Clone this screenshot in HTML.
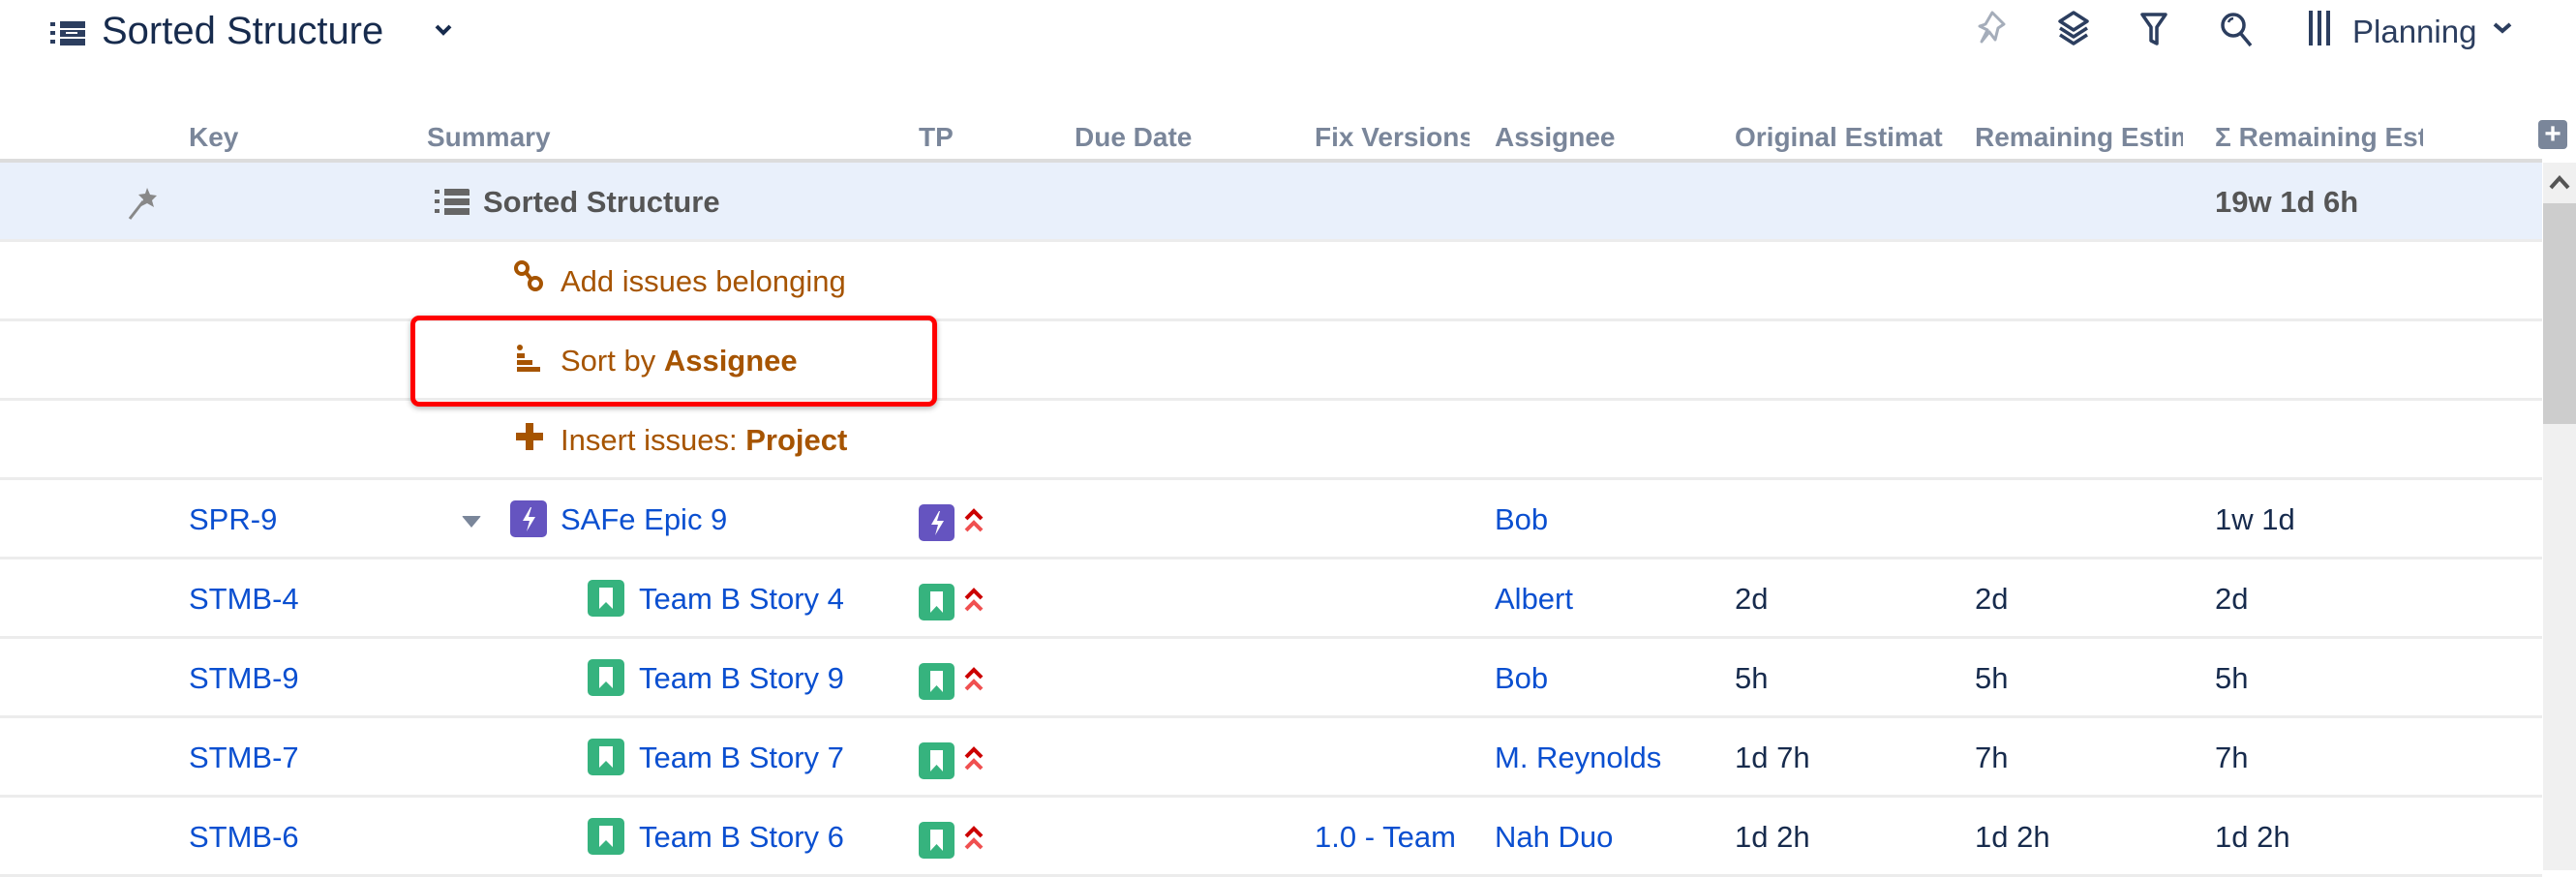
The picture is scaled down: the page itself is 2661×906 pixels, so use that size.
<!DOCTYPE html>
<html><head><meta charset="utf-8"><style>
*{margin:0;padding:0;box-sizing:border-box}
body{width:2661px;height:899px;overflow:hidden;background:#fff;font-family:"Liberation Sans",sans-serif;position:relative}
.a{position:absolute;white-space:nowrap}
.h{font-weight:bold;color:#7a869a;font-size:28px;top:126px}
.row{position:absolute;left:0;width:2626px;height:82px;border-bottom:3px solid #ececec}
.t{font-size:31px;position:absolute;white-space:nowrap;line-height:82px;top:0}
.lk{color:#0a4fd0}
.dk{color:#172b4d}
.or{color:#a65400}
.ic{position:absolute;border-radius:5px}
</style></head><body>
<!-- top bar -->
<svg class="a" style="left:50px;top:20px" width="40" height="30" viewBox="0 0 40 30"><g fill="#2c3e5f"><rect x="12" y="2" width="26" height="7"/><rect x="12" y="11" width="26" height="7"/><rect x="12" y="20" width="26" height="7"/><rect x="2" y="3" width="5" height="4"/><rect x="2" y="12" width="5" height="4"/><rect x="2" y="21" width="5" height="4"/></g><g fill="#fff"><rect x="18" y="13" width="12" height="2"/></g></svg>
<div class="a" style="left:105px;top:10px;font-size:40px;color:#172b4d">Sorted Structure</div>
<svg class="a" style="left:448px;top:24px" width="20" height="14"><path d="M3 3l7 7 7-7" stroke="#172b4d" stroke-width="4" fill="none"/></svg>
<svg class="a" style="left:2040px;top:10px" width="36" height="40" viewBox="0 0 36 40"><path d="M18 3l12 12-6 4-3 12-6-8-8 10 6-12-8-4 6-2z" stroke="#a5adba" stroke-width="3" fill="none" stroke-linejoin="round"/></svg>
<svg class="a" style="left:2124px;top:10px" width="36" height="38" viewBox="0 0 36 38"><g stroke="#2c3e5f" stroke-width="3.5" fill="none" stroke-linejoin="round"><path d="M18 3l14 9-14 9-14-9z"/><path d="M4 19l14 9 14-9"/><path d="M4 26l14 9 14-9"/></g></svg>
<svg class="a" style="left:2210px;top:12px" width="30" height="36" viewBox="0 0 30 36"><path d="M3 3h24l-9 13v17l-6 -3v-14z" stroke="#2c3e5f" stroke-width="3.5" fill="none" stroke-linejoin="round"/></svg>
<svg class="a" style="left:2292px;top:11px" width="36" height="40" viewBox="0 0 36 40"><circle cx="15" cy="15" r="11" stroke="#2c3e5f" stroke-width="3.5" fill="none"/><path d="M23 24l10 12" stroke="#2c3e5f" stroke-width="3.5"/><path d="M10 12a6 6 0 0 1 5-4" stroke="#2c3e5f" stroke-width="2.5" fill="none"/></svg>
<svg class="a" style="left:2384px;top:11px" width="24" height="36"><g fill="#2c3e5f"><rect x="1" y="0" width="4" height="36"/><rect x="10" y="0" width="4" height="36"/><rect x="19" y="0" width="4" height="36"/></g></svg>
<div class="a" style="left:2430px;top:14px;font-size:33px;color:#2c3e5f">Planning</div>
<svg class="a" style="left:2574px;top:22px" width="22" height="14"><path d="M3 3l8 7 8-7" stroke="#2c3e5f" stroke-width="4" fill="none"/></svg>

<!-- header -->
<div class="a h" style="left:195px">Key</div>
<div class="a h" style="left:441px">Summary</div>
<div class="a h" style="left:949px">TP</div>
<div class="a h" style="left:1110px">Due Date</div>
<div class="a h" style="left:1358px;width:160px;overflow:hidden">Fix Versions</div>
<div class="a h" style="left:1544px">Assignee</div>
<div class="a h" style="left:1792px;width:215px;overflow:hidden">Original Estimate</div>
<div class="a h" style="left:2040px;width:215px;overflow:hidden">Remaining Estimate</div>
<div class="a h" style="left:2288px;width:215px;overflow:hidden">Σ Remaining Estimate</div>
<div class="a" style="left:2622px;top:124px;width:30px;height:30px;background:#7a869a;border-radius:4px;color:#fff;font-weight:bold;font-size:30px;line-height:30px;text-align:center">+</div>
<div class="a" style="left:0;top:164px;width:2626px;height:4px;background:#dcdcdc"></div>

<!-- root row -->
<div class="row" style="top:168px;background:#e9f0fb;height:82px">
<svg class="ic" style="left:130px;top:20px" width="40" height="42" viewBox="0 0 40 42"><path d="M4 38l14-18" stroke="#888" stroke-width="3"/><path d="M22 6l3 7 7 1-5 5 2 7-7-4-6 3 2-7-5-5 7-1z" fill="#888"/></svg>
<svg class="ic" style="left:448px;top:26px" width="38" height="30" viewBox="0 0 38 30"><g fill="#666"><rect x="11" y="1" width="26" height="7"/><rect x="11" y="11" width="26" height="7"/><rect x="11" y="21" width="26" height="7"/><rect x="1" y="2" width="5" height="4"/><rect x="1" y="12" width="5" height="4"/><rect x="1" y="22" width="5" height="4"/></g></svg>
<div class="t" style="left:499px;font-weight:bold;color:#555">Sorted Structure</div>
<div class="t" style="left:2288px;font-weight:bold;color:#555">19w 1d 6h</div>
</div>

<div class="row" style="top:250px">
<svg class="ic" style="left:530px;top:18px" width="34" height="36" viewBox="0 0 34 36"><g stroke="#a65400" stroke-width="4" fill="none"><rect x="3" y="3" width="12" height="12" rx="6"/><rect x="17" y="19" width="12" height="12" rx="6"/><path d="M12 12l8 10"/></g></svg>
<div class="t or" style="left:579px">Add issues belonging</div>
</div>
<div class="row" style="top:332px">
<svg class="ic" style="left:532px;top:22px" width="30" height="34"><g fill="#a65400"><rect x="2" y="2" width="6" height="6" rx="3"/><rect x="2" y="11" width="8" height="5"/><rect x="2" y="18" width="16" height="5"/><rect x="2" y="25" width="24" height="5"/></g></svg>
<div class="t or" style="left:579px">Sort by <b>Assignee</b></div>
</div>
<div class="row" style="top:414px">
<svg class="ic" style="left:532px;top:22px" width="30" height="30"><g fill="#a65400"><rect x="11" y="1" width="8" height="28"/><rect x="1" y="11" width="28" height="8"/></g></svg>
<div class="t or" style="left:579px">Insert issues: <b>Project</b></div>
</div>
<div class="a" style="left:424px;top:326px;width:544px;height:94px;border:5px solid #f00;border-radius:9px;box-shadow:0 2px 6px rgba(0,0,0,.3)"></div>

<!-- SPR-9 -->
<div class="row" style="top:496px">
<div class="t lk" style="left:195px">SPR-9</div>
<svg class="ic" style="left:476px;top:36px" width="22" height="14"><path d="M1 1h20l-10 12z" fill="#7a869a"/></svg>
<div class="ic" style="left:527px;top:21px;width:38px;height:38px;background:#6554c0"><svg width="38" height="38"><path d="M21 7l-8 14h7l-3 11 9-15h-7l3-10z" fill="#fff"/></svg></div>
<div class="t lk" style="left:579px">SAFe Epic 9</div>
<div class="ic" style="left:949px;top:25px;width:37px;height:38px;background:#6554c0"><svg width="37" height="38"><path d="M21 7l-8 14h7l-3 11 9-15h-7l3-10z" fill="#fff"/></svg></div>
<svg class="ic" style="left:995px;top:27px" width="22" height="30"><path d="M3 13l8-8 8 8" stroke="#c00" stroke-width="4" fill="none"/><path d="M3 25l8-8 8 8" stroke="#f05050" stroke-width="4" fill="none"/></svg>
<div class="t lk" style="left:1544px">Bob</div>
<div class="t dk" style="left:2288px">1w 1d</div>
</div>

<!-- story rows -->
<div class="row" style="top:578px">
<div class="t lk" style="left:195px">STMB-4</div>
<div class="ic" style="left:607px;top:21px;width:38px;height:38px;background:#36b37e"><svg width="38" height="38"><path d="M12 8h14v22l-7-7-7 7z" fill="#fff"/></svg></div>
<div class="t lk" style="left:660px">Team B Story 4</div>
<div class="ic" style="left:949px;top:25px;width:37px;height:38px;background:#36b37e"><svg width="37" height="38"><path d="M12 8h13v22l-6.5-7-6.5 7z" fill="#fff"/></svg></div>
<svg class="ic" style="left:995px;top:27px" width="22" height="30"><path d="M3 13l8-8 8 8" stroke="#c00" stroke-width="4" fill="none"/><path d="M3 25l8-8 8 8" stroke="#f05050" stroke-width="4" fill="none"/></svg>
<div class="t lk" style="left:1544px">Albert</div>
<div class="t dk" style="left:1792px">2d</div><div class="t dk" style="left:2040px">2d</div><div class="t dk" style="left:2288px">2d</div>
</div>
<div class="row" style="top:660px">
<div class="t lk" style="left:195px">STMB-9</div>
<div class="ic" style="left:607px;top:21px;width:38px;height:38px;background:#36b37e"><svg width="38" height="38"><path d="M12 8h14v22l-7-7-7 7z" fill="#fff"/></svg></div>
<div class="t lk" style="left:660px">Team B Story 9</div>
<div class="ic" style="left:949px;top:25px;width:37px;height:38px;background:#36b37e"><svg width="37" height="38"><path d="M12 8h13v22l-6.5-7-6.5 7z" fill="#fff"/></svg></div>
<svg class="ic" style="left:995px;top:27px" width="22" height="30"><path d="M3 13l8-8 8 8" stroke="#c00" stroke-width="4" fill="none"/><path d="M3 25l8-8 8 8" stroke="#f05050" stroke-width="4" fill="none"/></svg>
<div class="t lk" style="left:1544px">Bob</div>
<div class="t dk" style="left:1792px">5h</div><div class="t dk" style="left:2040px">5h</div><div class="t dk" style="left:2288px">5h</div>
</div>
<div class="row" style="top:742px">
<div class="t lk" style="left:195px">STMB-7</div>
<div class="ic" style="left:607px;top:21px;width:38px;height:38px;background:#36b37e"><svg width="38" height="38"><path d="M12 8h14v22l-7-7-7 7z" fill="#fff"/></svg></div>
<div class="t lk" style="left:660px">Team B Story 7</div>
<div class="ic" style="left:949px;top:25px;width:37px;height:38px;background:#36b37e"><svg width="37" height="38"><path d="M12 8h13v22l-6.5-7-6.5 7z" fill="#fff"/></svg></div>
<svg class="ic" style="left:995px;top:27px" width="22" height="30"><path d="M3 13l8-8 8 8" stroke="#c00" stroke-width="4" fill="none"/><path d="M3 25l8-8 8 8" stroke="#f05050" stroke-width="4" fill="none"/></svg>
<div class="t lk" style="left:1544px">M. Reynolds</div>
<div class="t dk" style="left:1792px">1d 7h</div><div class="t dk" style="left:2040px">7h</div><div class="t dk" style="left:2288px">7h</div>
</div>
<div class="row" style="top:824px">
<div class="t lk" style="left:195px">STMB-6</div>
<div class="ic" style="left:607px;top:21px;width:38px;height:38px;background:#36b37e"><svg width="38" height="38"><path d="M12 8h14v22l-7-7-7 7z" fill="#fff"/></svg></div>
<div class="t lk" style="left:660px">Team B Story 6</div>
<div class="ic" style="left:949px;top:25px;width:37px;height:38px;background:#36b37e"><svg width="37" height="38"><path d="M12 8h13v22l-6.5-7-6.5 7z" fill="#fff"/></svg></div>
<svg class="ic" style="left:995px;top:27px" width="22" height="30"><path d="M3 13l8-8 8 8" stroke="#c00" stroke-width="4" fill="none"/><path d="M3 25l8-8 8 8" stroke="#f05050" stroke-width="4" fill="none"/></svg>
<div class="t lk" style="left:1358px;width:160px;overflow:hidden">1.0 - Team</div>
<div class="t lk" style="left:1544px">Nah Duo</div>
<div class="t dk" style="left:1792px">1d 2h</div><div class="t dk" style="left:2040px">1d 2h</div><div class="t dk" style="left:2288px">1d 2h</div>
</div>

<!-- scrollbar -->
<div class="a" style="left:2627px;top:168px;width:34px;height:731px;background:#f0f0f0"></div>
<svg class="a" style="left:2633px;top:180px" width="22" height="16"><path d="M2 14l9-10 9 10" stroke="#555" stroke-width="4" fill="none"/></svg>
<div class="a" style="left:2627px;top:210px;width:34px;height:228px;background:#cdcdcd"></div>
</body></html>
